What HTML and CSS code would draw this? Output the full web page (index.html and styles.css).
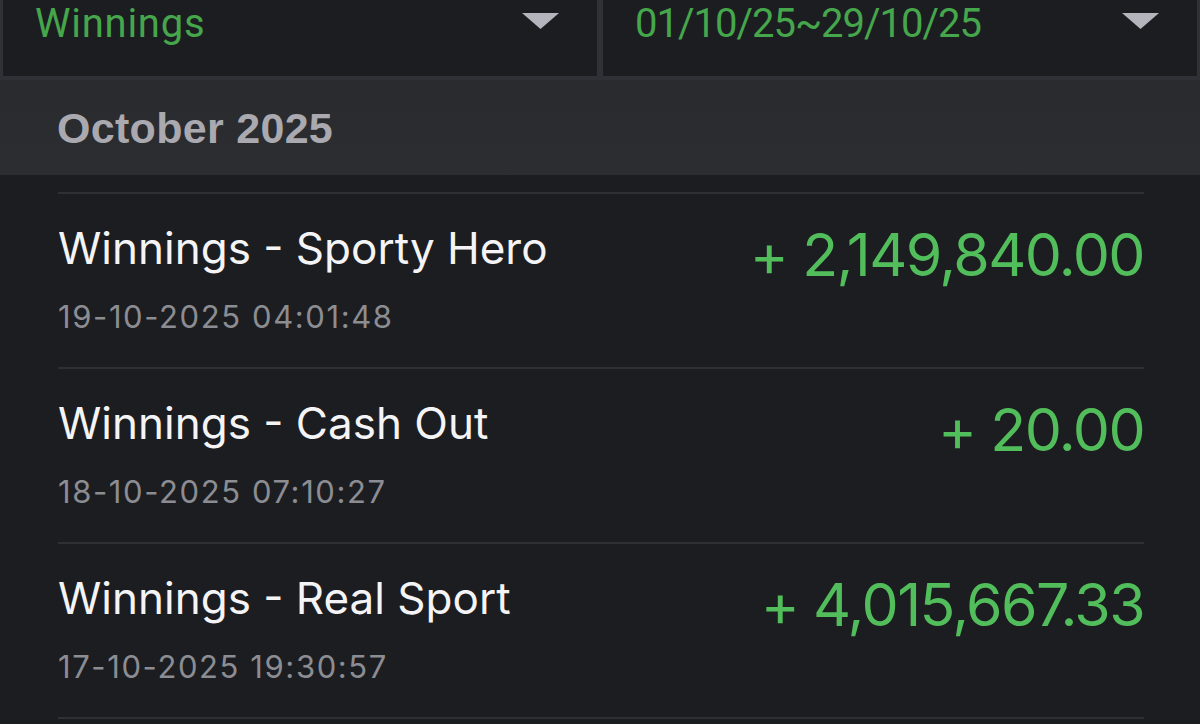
FILE: index.html
```html
<!DOCTYPE html>
<html lang="en">
<head>
<meta charset="utf-8">
<title>Winnings</title>
<link rel="stylesheet" href="styles.css">
</head>
<body>
<div class="page">
  <div class="filters">
    <div class="filter">
      <span class="filter-text filter-type">Winnings</span>
      <svg class="caret" width="37" height="16" viewBox="0 0 37 16"><polygon points="0,0 37,0 18.5,16" fill="#b4b5bc"/></svg>
    </div>
    <div class="filter">
      <span class="filter-text filter-range">01/10/25~29/10/25</span>
      <svg class="caret" width="37" height="16" viewBox="0 0 37 16"><polygon points="0,0 37,0 18.5,16" fill="#b4b5bc"/></svg>
    </div>
  </div>
  <div class="month">October 2025</div>
  <div class="list">
    <div class="row">
      <div class="info">
        <div class="title">Winnings - Sporty Hero</div>
        <div class="date">19-10-2025 04:01:48</div>
      </div>
      <div class="amount">+ 2,149,840.00</div>
    </div>
    <div class="row">
      <div class="info">
        <div class="title">Winnings - Cash Out</div>
        <div class="date">18-10-2025 07:10:27</div>
      </div>
      <div class="amount">+ 20.00</div>
    </div>
    <div class="row">
      <div class="info">
        <div class="title">Winnings - Real Sport</div>
        <div class="date">17-10-2025 19:30:57</div>
      </div>
      <div class="amount">+ 4,015,667.33</div>
    </div>
    <div class="row"></div>
  </div>
</div>
</body>
</html>
```
FILE: styles.css
```css
html, body {
  margin: 0;
  padding: 0;
  background: #1c1d21;
  overflow: hidden;
}
.page {
  width: 1200px;
  height: 724px;
  overflow: hidden;
  background: #1c1d21;
}
.filters {
  display: flex;
  gap: 6px;
  background: #303136;
  padding: 0 3px 4px 3px;
}
.filter {
  flex: 1;
  height: 76px;
  background: #1c1d21;
  display: flex;
  align-items: flex-start;
  justify-content: space-between;
  padding: 0 38px 0 32px;
}
.filter-text {
  font-family: Roboto, "Liberation Sans", sans-serif;
  font-size: 40px;
  line-height: 47px;
  color: #45a64c;
}
.filter-type {
  letter-spacing: 0.75px;
}
.filter-range {
  letter-spacing: -1px;
}
.caret {
  margin-top: 13px;
  display: block;
}
.month {
  background: linear-gradient(180deg, #2a2b2f 0%, #2c2d31 100%);
  height: 95px;
  box-sizing: border-box;
  padding: 27px 0 0 57px;
  font-family: "Liberation Sans", Arial, sans-serif;
  font-weight: bold;
  font-size: 43px;
  line-height: 43px;
  letter-spacing: 0.3px;
  color: #a9a9af;
}
.list {
  padding: 17px 56px 0 58px;
}
.row {
  display: flex;
  justify-content: space-between;
  align-items: flex-start;
  height: 175px;
  box-sizing: border-box;
  border-top: 2px solid #2f3035;
  padding-top: 32px;
}
.title {
  font-family: Inter, "Noto Sans", sans-serif;
  font-size: 44px;
  line-height: 44px;
  color: #f4f4f6;
}
.date {
  font-family: Inter, "Noto Sans", sans-serif;
  font-size: 31px;
  line-height: 31px;
  letter-spacing: 1.6px;
  margin-top: 31px;
  color: #8c8d93;
}
.amount {
  font-family: Inter, "Noto Sans", sans-serif;
  font-size: 59px;
  line-height: 59px;
  letter-spacing: -1.6px;
  margin-top: -1px;
  color: #52bd5b;
}
```
